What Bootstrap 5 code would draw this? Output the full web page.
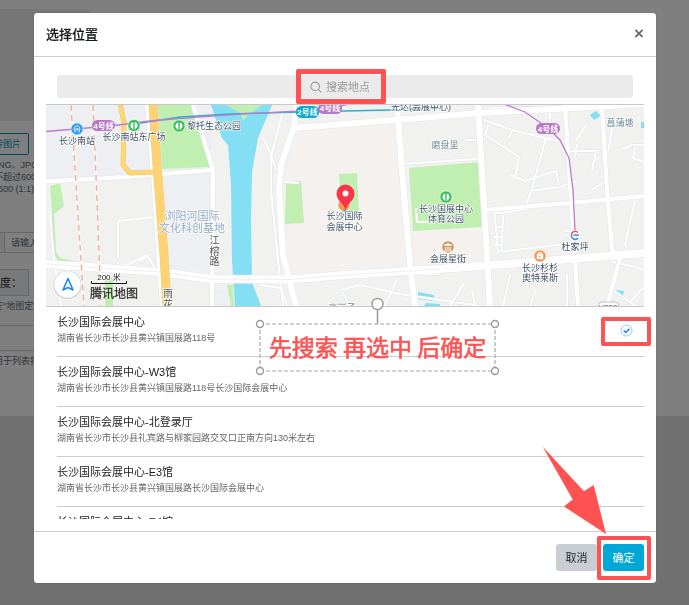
<!DOCTYPE html>
<html lang="zh-CN">
<head>
<meta charset="utf-8">
<meta name="viewport" content="width=device-width, initial-scale=1">
<title>选择位置</title>
<link href="https://cdn.jsdelivr.net/npm/bootstrap@5.3.0/dist/css/bootstrap.min.css" rel="stylesheet">
<style>
  body { font-family: "Liberation Sans", "Noto Sans CJK SC", sans-serif; font-size: 9px; line-height: 12px; background: #e3e3e3; color: #23282c; }
  button, input { font-family: inherit; }

  /* form page behind the dialog */
  .form-page { min-height: 416px; background: #fff; padding-top: 9px; color: #5c6873; }
  .page-strip { width: 89px; white-space: nowrap; }
  .preview-box { height: 112px; background: #ececec; }
  .upload-btn { width: 29px; height: 22px; margin-top: 12px; padding: 0 7px 0 0; font-size: 9px; border-radius: 0 2px 2px 0; color: #0098bd; border: 1px solid #0098bd; border-left: 0; background: #fff; overflow: hidden; }
  .cut-left { margin-left: -6px; }
  .cut-slight { margin-left: -2px; }
  .field-row { margin-top: 37px; }
  .field-input { width: 80px; height: 21px; border: 1px solid #c8ced3; border-radius: 0; padding: 0 6px; font-size: 9px; background: #fff; }
  .field-input::placeholder { color: #5c6873; }
  .addon { width: 4px; background: #f0f3f5; border: 1px solid #c8ced3; border-width: 1px 0; }
  .degree-label { width: 29px; height: 27px; background: #f0f3f5; border: 1px solid #c8ced3; border-left: 0; font-size: 11px; color: #23282c; }
  .degree-hint { height: 25px; }
  .page-rule { border-top: 1px solid #c8ced3; height: 25px; }

  /* dialog */
  .picker .modal-dialog { max-width: none; margin: 13px 33px 13px 34px; }
  .picker .modal-content { border-radius: 3px; box-shadow: 0 0 1px rgba(0,0,0,.6); border-width: 0; }
  .picker .modal-header { height: 44px; padding: 0 12px; border-color: #c8ced3; }
  .picker .modal-title { font-size: 13px; line-height: 20px; font-weight: 500; color: #181b1e; -webkit-text-stroke: .2px #181b1e; }
  .close-btn { font-size: 17px; line-height: 18px; font-weight: 700; color: #6c6c6c; border: 0; background: none; padding: 0 0 2px; }
  .picker .modal-body { padding: 18px 12px 12px; }
  .picker .modal-footer { height: 52px; padding: 0 12px; gap: 6px; border-color: #c8ced3; }
  .picker .modal-footer > * { margin: 0; }
  .picker .modal-footer .btn { width: 41px; height: 27px; padding: 0; font-size: 11px; line-height: 16px; border-radius: 3px; border: 0; }
  .picker .btn-cancel { background: #c8ced3; color: #23282c; }
  .picker .btn-ok { background: #00a8d8; color: #fff; }

  .search-bar { height: 23px; margin: 0 11px 6px; background: #ebebeb; border-radius: 3px; }
  .search-inner { width: 70px; gap: 4px; }
  .search-inner input { width: 54px; padding: 0; border: 0; outline: 0; background: transparent; font-size: 11px; line-height: 16px; }
  .search-inner input::placeholder { color: #999; opacity: 1; }

  .map-view { height: 203px; border-top: 1px solid #c8c8c8; border-bottom: 1px solid #c8c8c8; background: #f1f1f0; overflow: hidden; }
  .map-view svg { width: 100%; height: 100%; display: block; }
  .map-view text { font-size: 9px; fill: #3f5166; stroke: #fff; stroke-width: 1.4px; paint-order: stroke; stroke-linejoin: round; }
  .map-view .lbl-area { font-size: 11px; fill: #91a9c2; }
  .map-view .lbl-village { fill: #708996; }
  .map-view .lbl-road { fill: #555; font-size: 10px; }
  .map-view .lbl-line { fill: #fff; stroke: none; font-size: 8px; font-weight: 700; }
  .map-view .lbl-shield { fill: #555; font-size: 8px; }
  .map-view .lbl-scale { fill: #111; font-size: 8px; }
  .map-view .lbl-brand { fill: #333; font-size: 12px; stroke: #333; stroke-width: .3px; }

  .place-list { height: 212px; margin-left: 11px; overflow: hidden; }
  .place { height: 50px; border-bottom: 1px solid #ccc; padding: 7px 11px 0 0; }
  .place-name { font-size: 11px; line-height: 16px; color: #222; }
  .place-addr { font-size: 9px; line-height: 16px; color: #666; }
  .tick { margin-top: 10px; }

  /* guide marks laid over the dialog */
  .guide { position: absolute; border: 5px solid #ff5252; border-radius: 2px; pointer-events: none; }
  .guide-search { left: -14px; right: -6px; top: -10px; bottom: -9px; }
  .guide-tick { right: -7px; top: 10px; width: 50px; height: 29px; border-width: 4px; }
  .guide-ok { left: -6px; right: -7px; top: -8px; bottom: -9px; border-width: 4px; }
  .guide-arrow { position: absolute; left: -61px; top: -98px; pointer-events: none; }
  .guide-note { position: absolute; left: calc(50% - 91px); top: -10px; width: 247px; height: 80px; pointer-events: none; }
  .guide-note svg { position: absolute; inset: 0; }
  .guide-note p { position: relative; margin: 0; padding-top: 33px; text-align: center; font-size: 23px; line-height: 32px; color: #ff5252; -webkit-text-stroke: .6px #ff5252; font-family: "Noto Sans CJK SC", sans-serif; white-space: nowrap; }
</style>
</head>
<body>

<main class="form-page">
  <div class="page-strip">
    <div class="preview-box"></div>
    <button type="button" class="upload-btn d-flex justify-content-end align-items-center">上传图片</button>
    <div class="mt-1 cut-slight">NG、JPG</div>
    <div class="cut-left">不超过600*600</div>
    <div class="cut-slight">600 (1:1)</div>
    <div class="field-row d-flex"><span class="addon"></span><input class="field-input" aria-label="名称" placeholder="请输入名称"></div>
    <div class="d-flex mt-3"><span class="degree-label d-flex align-items-center">度：</span></div>
    <div class="degree-hint cut-left mt-1">在"地图定位"</div>
    <div class="page-rule"></div>
    <div class="page-rule cut-left pt-1">用于列表排序</div>
  </div>
</main>

<div class="modal-backdrop show"></div>

<div class="modal picker d-block" role="dialog" aria-labelledby="pickerTitle">
  <div class="modal-dialog">
    <div class="modal-content">
      <div class="modal-header d-flex justify-content-between align-items-center">
        <h1 class="modal-title" id="pickerTitle">选择位置</h1>
        <button type="button" class="close-btn" aria-label="关闭">×</button>
      </div>

      <div class="modal-body">
        <div class="search-bar d-flex justify-content-center align-items-center">
          <label class="search-inner position-relative d-flex align-items-center">
            <svg width="12" height="12" viewBox="0 0 12 12" fill="none" stroke="#999" stroke-width="1.1" stroke-linecap="round"><circle cx="5.2" cy="5.4" r="4.3"/><path d="M8.4 8.6 11 11.2"/></svg>
            <input type="text" placeholder="搜索地点" aria-label="搜索地点">
            <span class="guide guide-search"></span>
          </label>
        </div>

        <div class="map-view">
          <svg viewBox="46 105 598 201" preserveAspectRatio="xMidYMid slice" role="img" aria-label="地图">
            <rect x="46" y="105" width="598" height="201" fill="#f1f1f0"/>
            <path fill="#edeff2" d="M46 105H212V168L150 175 46 181ZM163 172 211 169V272L168 268ZM214 290H228V306H214Z"/>
            <path fill="#f5f1ef" d="M296 128 397 121 408 268 288 276 283 190ZM413 231 482 227 486 263 415 268Z"/>
            <!-- water -->
            <path fill="#84dff5" d="M211 105H272L258 138 252 172 251 220 252 282 261 306H235L232 260 231 185 228 145 222 138Z"/>
            <path fill="#84dff5" d="M590 115 596 111 601 116 594 120ZM615 290 624 291 623 295 615 294ZM418 292 434 295V301L418 299ZM426 303 440 304V306H424ZM641 122H644V128H641Z"/>
            <!-- parks -->
            <g fill="#c1efb2">
              <path d="M158 105H193L210 167 162 169Z"/>
              <path d="M226 105H262L247 116 243 121 240 113Z"/>
              <path d="M409 168 480 162 482 227 413 231Z"/>
              <path d="M286 182 301 181 304 223 285 224ZM339 174 357 173 359 211 341 212Z"/>
              <path d="M50 186 60 183 64 206 54 214 56 252 60 258 75 261V263L58 261 53 252 52 210Z"/>
              <path d="M105 278H113V306H105ZM227 285H233L234 306H231Z"/>
            </g>
            <!-- minor streets: casing, then surface -->
            <path id="minor" fill="none" stroke="#e0e5ea" stroke-width="3" d="M50 215 54 260 61 306M263 137 271 155 276 170M283 110 271 157V190L277 250 283 306M299 183 285 182M118 258V221L155 217M120 268 147 255 157 272M147 255 140 262M260 285 281 288 287 306M296 281 345 276 440 274M340 290 360 285 400 294 480 306M343 293 350 306M397 279 391 293 384 306M484 120 512 130 558 141M488 125 485 135 519 157 515 178M512 130 509 138M510 175 525 181 556 171 559 185M550 111V130M546 138 533 185 527 203M530 191 560 187 576 181M570 151H596L592 170M577 145 575 157M576 141 586 125M613 125 608 152M622 149 632 145H644M635 147 633 158 644 162M636 195 625 245M545 206 500 213H494M495 215 498 252 576 243M496 254 502 250 503 215M495 227H503M494 237H503M495 245H503M565 231H577M644 287 630 302M530 306 536 290M510 275 503 306M464 283 450 306M567 275V306M614 291 636 306M612 262 632 266 644 270M472 290 475 306M592 190 606 181M466 140H480M400 164 478 159M490 108H560"/>
            <path fill="none" stroke="#fff" stroke-width="2" d="M50 215 54 260 61 306M263 137 271 155 276 170M283 110 271 157V190L277 250 283 306M299 183 285 182M118 258V221L155 217M120 268 147 255 157 272M147 255 140 262M260 285 281 288 287 306M296 281 345 276 440 274M340 290 360 285 400 294 480 306M343 293 350 306M397 279 391 293 384 306M484 120 512 130 558 141M488 125 485 135 519 157 515 178M512 130 509 138M510 175 525 181 556 171 559 185M550 111V130M546 138 533 185 527 203M530 191 560 187 576 181M570 151H596L592 170M577 145 575 157M576 141 586 125M613 125 608 152M622 149 632 145H644M635 147 633 158 644 162M636 195 625 245M545 206 500 213H494M495 215 498 252 576 243M496 254 502 250 503 215M495 227H503M494 237H503M495 245H503M565 231H577M644 287 630 302M530 306 536 290M510 275 503 306M464 283 450 306M567 275V306M614 291 636 306M612 262 632 266 644 270M472 290 475 306M592 190 606 181M466 140H480M400 164 478 159M490 108H560M416 208 417 222H432"/>
            <!-- main roads -->
            <g fill="none" stroke-linejoin="round">
              <g stroke="#e2e6ea">
                <path stroke-width="5" d="M46 181.500 125 177 212 170M193 105 213 170 212 306M147 105 153 175 162 306M565 105 570 185 578 306M602 107 607 190 612 250 620 258 607 306M484 210 570 203 644 196"/>
                <path stroke-width="7" d="M297 105 294 127 281 165 279 190 283 255 296 306M397 105 402 170 410 265 415 306M478 105 483 190 490 306M294 128 395 120 480 113 644 104"/>
                <path stroke-width="9" d="M46 264 160 272 212 279 290 279.500 345 275 440 269 520 263 644 253"/>
              </g>
              <g stroke="#fff">
                <path stroke-width="4" d="M46 181.500 125 177 212 170M193 105 213 170 212 306M147 105 153 175 162 306M565 105 570 185 578 306M602 107 607 190 612 250 620 258 607 306M484 210 570 203 644 196"/>
                <path stroke-width="6" d="M297 105 294 127 281 165 279 190 283 255 296 306M397 105 402 170 410 265 415 306M478 105 483 190 490 306M294 128 395 120 480 113 644 104"/>
                <path stroke-width="8" d="M46 264 160 272 212 279 290 279.500 345 275 440 269 520 263 644 253"/>
              </g>
              <path stroke="#e4e7ec" stroke-width=".7" d="M46 264 160 272 212 279 290 279.500 345 275 440 269"/>
              <path stroke="#efc468" stroke-width="5" d="M120 104 124 122 123 165 130 173 156 172"/>
              <path stroke="#ffd674" stroke-width="4" d="M120 104 124 122 123 165 130 173 156 172"/>
              <path stroke="#f1cb76" stroke-width="9" d="M153 104 157 165 160 203 164 255 167 306"/>
              <path stroke="#ffd373" stroke-width="8" d="M153 104 157 165 160 203 164 255 167 306"/>
            </g>
            <!-- railways -->
            <g fill="none" stroke="#fff" stroke-width="2"><path d="M71 105 77 200 84 306M93 105 97 200 101 306"/></g>
            <g fill="none" stroke="#eeae92" stroke-width="1.400" stroke-dasharray="6 4"><path d="M71 105 77 200 84 306M93 105 97 200 101 306"/></g>
            <!-- metro -->
            <g fill="none" stroke-width="1.300">
              <path stroke="#26b2d5" d="M134 124 180 117 230 114 300 112 390 110 440 108"/>
              <path stroke="#bd7bcc" d="M46 131.500 110 126 150 121 185 118 240 114 320 110 350 104M504 104 525 112 548 128 560 140 569 158 573 190 575 232"/>
            </g>
            <rect x="92" y="120" width="23" height="11" rx="5.500" fill="#b878c8"/><text class="lbl-line" x="103.500" y="128.500" text-anchor="middle">4号线</text>
            <rect x="318" y="103" width="24" height="11" rx="5.500" fill="#b878c8"/><text class="lbl-line" x="330" y="111" text-anchor="middle">4号线</text>
            <rect x="296" y="106" width="23" height="12" rx="5.500" fill="#12a9cf"/><text class="lbl-line" x="307.500" y="115" text-anchor="middle">2号线</text>
            <rect x="536" y="123" width="24" height="11" rx="5.500" fill="#b878c8"/><text class="lbl-line" x="548" y="131.500" text-anchor="middle">4号线</text>
            <!-- points of interest -->
            <g stroke="#fff" stroke-width=".5">
              <circle cx="77" cy="129" r="6" fill="#2e9bf2"/>
              <circle cx="134" cy="125.500" r="6" fill="#38bd5c"/><circle cx="179" cy="126" r="6" fill="#38bd5c"/><circle cx="446" cy="197" r="6" fill="#38bd5c"/>
              <circle cx="448" cy="247" r="6" fill="#d69150"/><circle cx="540" cy="256" r="6" fill="#ff914f"/><circle cx="344" cy="205" r="6" fill="#f39a4e"/>
            </g>
            <path d="M75 132.500V131.200C73.300 129 74.500 125.800 77 125.800S80.700 129 79 131.200V132.500M76 130.500V128.800H78V130.500" fill="none" stroke="#fff" stroke-width="1"/>
            <path id="trees" fill="#fff" d="M133.300 122C129.600 122.500 129.600 128 132.600 128.500V129.500H133.300ZM134.700 122C138.400 122.500 138.400 128 135.400 128.500V129.500H134.700Z"/>
            <use href="#trees" x="45" y=".5"/><use href="#trees" x="312" y="71.500"/>
            <path fill="#fff" d="M448 243 452 245V246H444V245ZM445 247H446.200V250H445ZM447.400 247H448.600V250H447.400ZM449.800 247H451V250H449.800ZM444 250.500H452V251.500H444Z"/>
            <path d="M538.500 254V252.500H541.500V254" fill="none" stroke="#fff" stroke-width="1"/><path fill="#fff" d="M536.800 253.800H543.200V259.200H536.800Z"/><path d="M538.500 255.500C539 257 541 257 541.500 255.500" fill="none" stroke="#ff914f" stroke-width=".8"/>
            <rect x="570" y="230" width="10" height="10" rx="1" fill="#fff"/>
            <path d="M578 232.500A3.700 3.700 0 0 0 571.500 235" fill="none" stroke="#e7545c" stroke-width="1.500"/><path d="M571.500 235A3.700 3.700 0 0 0 578 238M573.500 235H579" fill="none" stroke="#3a91d5" stroke-width="1.500"/>
            <!-- selected place -->
            <path fill="#f93549" d="M345.500 210C343 202 336.500 201 336.500 193.500A9 9 0 0 1 354.500 193.500C354.500 201 348 202 345.500 210Z"/>
            <circle cx="345.500" cy="193.500" r="3" fill="#fff"/><circle cx="345" cy="211" r="1.600" fill="#3497ee"/>
            <!-- labels -->
            <g text-anchor="middle">
              <text x="77" y="143.500">长沙南站</text><text x="134" y="140">长沙南站东广场</text>
              <text x="421" y="110">光达(会展中心)</text>
              <text x="344.500" y="219">长沙国际</text><text x="344.500" y="229.500">会展中心</text>
              <text x="446" y="211.500">长沙国展中心</text><text x="446" y="222">体育公园</text>
              <text x="448" y="261.500">会展星街</text><text x="575" y="250">杜家坪</text>
              <text x="540" y="270.500">长沙杉杉</text><text x="540" y="281">奥特莱斯</text>
              <text class="lbl-village" x="445" y="147.500">磨盘里</text><text class="lbl-village" x="620" y="126">菖蒲塘</text><text class="lbl-village" x="342" y="311">高岸子</text>
              <text class="lbl-area" x="192" y="219.500">浏阳河国际</text><text class="lbl-area" x="192" y="232">文化科创基地</text>
              <text class="lbl-road" x="214.500" y="244">江</text><text class="lbl-road" x="214.500" y="254.500">榕</text><text class="lbl-road" x="214.500" y="265">路</text>
              <text class="lbl-road" x="168" y="297">雨</text><text class="lbl-road" x="168" y="307.500">花</text>
              <rect x="598" y="302" width="21" height="9" rx="4" fill="#fff" stroke="#999" stroke-width=".6"/><text class="lbl-shield" x="608" y="310">Y253</text>
            </g>
            <text x="187" y="129">黎托生态公园</text>
            <!-- controls -->
            <circle cx="67.500" cy="285" r="14" fill="#bbb" opacity=".6"/><circle cx="67.500" cy="284.500" r="13.200" fill="#fff"/>
            <path d="M68 278.500 63 290 68 287.500 73 290Z" fill="none" stroke="#1f87f0" stroke-width="1.600" stroke-linejoin="round"/>
            <path d="M91.500 281V283.500H126.500V281" fill="none" stroke="#111" stroke-width="1"/>
            <text class="lbl-scale" x="109" y="279.500" text-anchor="middle">200 米</text>
            <text class="lbl-brand" x="90" y="297.500">腾讯地图</text>
          </svg>
        </div>

        <div class="position-relative">
          <div class="place-list">
            <div class="place d-flex justify-content-between align-items-start">
              <div><div class="place-name">长沙国际会展中心</div><div class="place-addr">湖南省长沙市长沙县黄兴镇国展路118号</div></div>
              <svg class="tick" width="13" height="13" viewBox="0 0 13 13" fill="none"><circle cx="6.500" cy="6.500" r="5.500" stroke="#85bdf6" stroke-width=".9"/><path d="M3.800 6.600 5.800 8.500 9.400 4.900" stroke="#1e87f0" stroke-width="1.500"/></svg>
            </div>
            <div class="place"><div class="place-name">长沙国际会展中心-W3馆</div><div class="place-addr">湖南省长沙市长沙县黄兴镇国展路118号长沙国际会展中心</div></div>
            <div class="place"><div class="place-name">长沙国际会展中心-北登录厅</div><div class="place-addr">湖南省长沙市长沙县礼宾路与柳家园路交叉口正南方向130米左右</div></div>
            <div class="place"><div class="place-name">长沙国际会展中心-E3馆</div><div class="place-addr">湖南省长沙市长沙县黄兴镇国展路长沙国际会展中心</div></div>
            <div class="place"><div class="place-name">长沙国际会展中心-E4馆</div></div>
          </div>
          <span class="guide guide-tick"></span>
          <div class="guide-note">
            <svg width="247" height="80" viewBox="0 0 247 80" fill="none">
              <path d="M6 27H241M6 74H241" stroke="#c4c4c4" stroke-width="1.700" stroke-dasharray="4 2"/>
              <path d="M6 27V74M241 27V74" stroke="#b4b4b4" stroke-width="1.400" stroke-dasharray="4 2"/>
              <path d="M123.500 13V27" stroke="#999" stroke-width="1.500"/>
              <g fill="#fff" stroke="#999" stroke-width="1.400"><circle cx="123.500" cy="7" r="5.500"/><circle cx="6" cy="27" r="3.500"/><circle cx="241" cy="27" r="3.500"/><circle cx="6" cy="74" r="3.500"/><circle cx="241" cy="74" r="3.500"/></g>
            </svg>
            <p>先搜索 再选中 后确定</p>
          </div>
        </div>
      </div>

      <div class="modal-footer d-flex justify-content-end align-items-center">
        <button type="button" class="btn btn-cancel">取消</button>
        <div class="position-relative">
          <button type="button" class="btn btn-ok d-block">确定</button>
          <span class="guide guide-ok"></span>
          <svg class="guide-arrow" width="65" height="89" viewBox="0 0 65 89"><path fill="#ff5252" d="M.7.7 42 45.300 51.700 39 64 88 22 60.500 30.700 53.500Z"/></svg>
        </div>
      </div>
    </div>
  </div>
</div>

<script src="https://cdn.jsdelivr.net/npm/bootstrap@5.3.0/dist/js/bootstrap.bundle.min.js"></script>
</body>
</html>
